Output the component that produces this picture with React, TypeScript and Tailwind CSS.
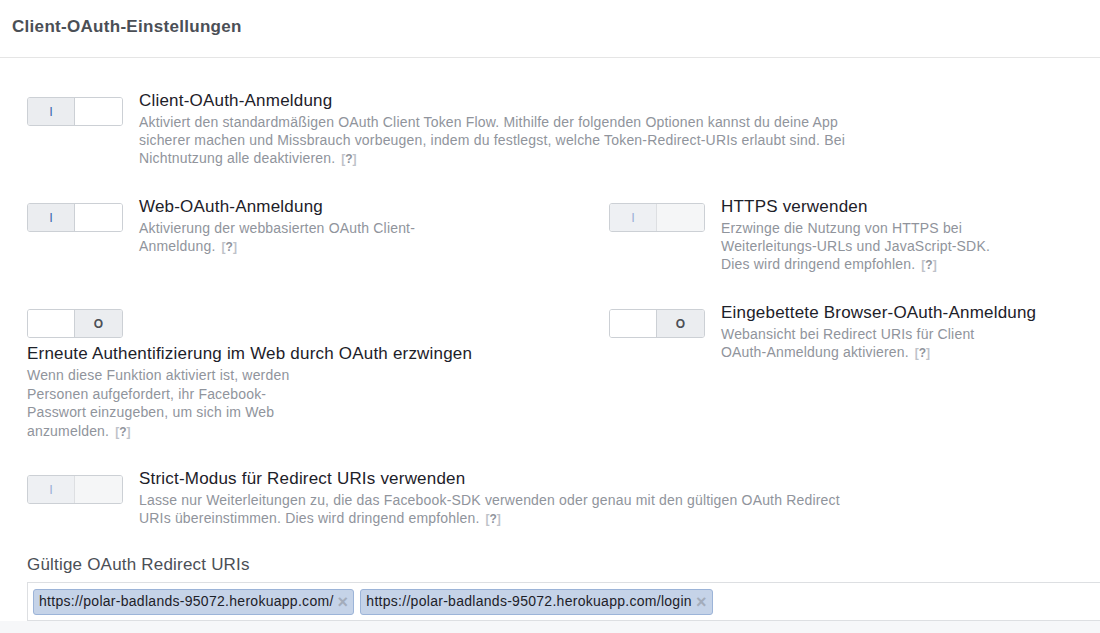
import React from "react"

type ToggleState = "on" | "off" | "disabled"

const Toggle = ({ state }: { state: ToggleState }) => {
    if (state === "off") {
        return (
            <div className="flex w-[96px] h-[29px] shrink-0 border border-[#ccd0d5] rounded-[3px] overflow-hidden">
                <div className="w-1/2 bg-white border-r border-[#ccd0d5]"></div>
                <div className="w-1/2 bg-[#ebedf0] flex items-center justify-center text-[12px] font-bold text-[#4b4f56]">O</div>
            </div>
        )
    }
    const disabled = state === "disabled"
    return (
        <div className="flex w-[96px] h-[29px] shrink-0 border border-[#ccd0d5] rounded-[3px] overflow-hidden">
            <div
                className={
                    disabled
                        ? "w-1/2 bg-[#eef0f3] border-r border-[#dddfe2] flex items-center justify-center text-[13px] text-[#9db0d8]"
                        : "w-1/2 bg-[#ebedf0] border-r border-[#ccd0d5] flex items-center justify-center text-[13px] text-[#4267b2]"
                }
            >
                I
            </div>
            <div className={disabled ? "w-1/2 bg-[#f5f6f7]" : "w-1/2 bg-white"}></div>
        </div>
    )
}

const Help = () => (
    <span className="ml-[6px] text-[12px] font-bold text-[#bec2c9] tracking-normal">
        [<span className="text-[#90949c]">?</span>]
    </span>
)

const Setting = ({
    state,
    title,
    desc,
    descWidth,
}: {
    state: ToggleState
    title: string
    desc: string
    descWidth: string
}) => (
    <div className="flex">
        <div className="pt-[8px]">
            <Toggle state={state} />
        </div>
        <div className="ml-[16px]">
            <div className="text-[17px] tracking-[0.2px] leading-[24px] text-[#1d2129]">{title}</div>
            <div className={`${descWidth} text-[14px] tracking-[0.18px] leading-[18px] text-[#90949c]`}>
                {desc}
                <Help />
            </div>
        </div>
    </div>
)

const Tag = ({ url }: { url: string }) => (
    <div className="flex items-center h-[26px] px-[5px] bg-[#c5d3e8] border border-[#9cb4d8] rounded-[3px] text-[14px] tracking-[0.28px] text-[#1d2129]">
        <span>{url}</span>
        <span className="ml-[4px] text-[18px] font-bold text-[#a3acbb] leading-none">×</span>
    </div>
)

export default function App() {
    return (
        <div className="w-full h-[633px] overflow-hidden bg-white font-['Liberation_Sans',Arial,sans-serif]">
            <div className="w-[1200px]">
                <div className="h-[58px] border-b border-[#e5e5e5] pl-[12px] flex items-center">
                    <h2 className="text-[17px] tracking-[0.3px] font-bold text-[#4b4f56] -mt-[4px]">Client-OAuth-Einstellungen</h2>
                </div>

                <div className="pl-[27px] pt-[31px]">
                    <Setting
                        state="on"
                        title="Client-OAuth-Anmeldung"
                        desc="Aktiviert den standardmäßigen OAuth Client Token Flow. Mithilfe der folgenden Optionen kannst du deine App sicherer machen und Missbrauch vorbeugen, indem du festlegst, welche Token-Redirect-URIs erlaubt sind. Bei Nichtnutzung alle deaktivieren."
                        descWidth="w-[728px]"
                    />

                    <div className="grid grid-cols-[582px_1fr] mt-[27px]">
                        <Setting
                            state="on"
                            title="Web-OAuth-Anmeldung"
                            desc="Aktivierung der webbasierten OAuth Client-Anmeldung."
                            descWidth="w-[286px]"
                        />
                        <Setting
                            state="disabled"
                            title="HTTPS verwenden"
                            desc="Erzwinge die Nutzung von HTTPS bei Weiterleitungs-URLs und JavaScript-SDK. Dies wird dringend empfohlen."
                            descWidth="w-[286px]"
                        />
                    </div>

                    <div className="grid grid-cols-[582px_1fr] mt-[27px]">
                        <div>
                            <div className="pt-[8px]">
                                <Toggle state="off" />
                            </div>
                            <div className="mt-[4px] text-[17px] tracking-[0.2px] leading-[24px] text-[#1d2129]">
                                Erneute Authentifizierung im Web durch OAuth erzwingen
                            </div>
                            <div className="w-[282px] text-[14px] tracking-[0.18px] leading-[18.5px] text-[#90949c]">
                                Wenn diese Funktion aktiviert ist, werden Personen aufgefordert, ihr Facebook-Passwort einzugeben, um sich im Web anzumelden.
                                <Help />
                            </div>
                        </div>
                        <Setting
                            state="off"
                            title="Eingebettete Browser-OAuth-Anmeldung"
                            desc="Webansicht bei Redirect URIs für Client OAuth-Anmeldung aktivieren."
                            descWidth="w-[286px]"
                        />
                    </div>

                    <div className="mt-[26px]">
                        <Setting
                            state="disabled"
                            title="Strict-Modus für Redirect URIs verwenden"
                            desc="Lasse nur Weiterleitungen zu, die das Facebook-SDK verwenden oder genau mit den gültigen OAuth Redirect URIs übereinstimmen. Dies wird dringend empfohlen."
                            descWidth="w-[728px]"
                        />
                    </div>

                    <div className="mt-[25px] text-[17px] tracking-[0.2px] leading-[24px] text-[#4b4f56]">Gültige OAuth Redirect URIs</div>
                    <div className="mt-[5px] h-[39px] border border-[#dddfe2] flex items-center gap-[6px] px-[5px]">
                        <Tag url="https://polar-badlands-95072.herokuapp.com/" />
                        <Tag url="https://polar-badlands-95072.herokuapp.com/login" />
                    </div>
                </div>
                <div className="h-[40px] bg-[#f6f7f9]"></div>
            </div>
        </div>
    )
}
